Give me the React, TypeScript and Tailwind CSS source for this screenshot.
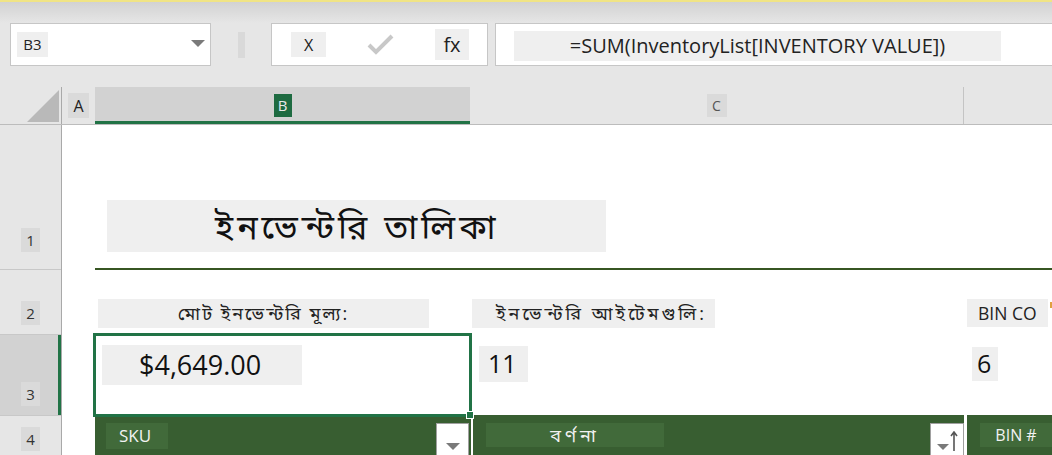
import React from "react";

const latin = "font-['Open_Sans','Noto_Sans','Noto_Sans_Bengali','Lohit_Bengali',sans-serif]";

//          component: small grey label chip used by headers          //
function Chip({ children, className = "" }: { children: React.ReactNode; className?: string }) {
  return <div className={`flex items-center justify-center ${className}`}>{children}</div>;
}

function RowHead({ n, h, pb, active }: { n: string; h: string; pb: string; active?: boolean }) {
  return (
    <div className={`flex ${h} ${active ? "bg-[#d2d2d2]" : ""} border-b border-[#c8c8c8]`}>
      <div className={`flex flex-1 items-end ${pb} pl-[21px]`}>
        <Chip className="h-[24px] w-[19px] bg-[#dadada] text-[15px] text-[#333]">{n}</Chip>
      </div>
      {active && <div className="w-[3px] bg-[#217346]" />}
    </div>
  );
}

export default function App() {
  return (
    <div className={`h-[455px] w-[1052px] overflow-hidden bg-[#e6e6e6] ${latin}`}>
      {/* title strip */}
      <div className="h-[2px] bg-[#f0e485]" />
      <div className="h-[21px] bg-gradient-to-b from-[#d2d2d2] to-[#e6e6e6]" />

      {/* formula bar */}
      <div className="flex h-[43px]">
        <div className="ml-[10px] flex w-[201px] items-center border border-[#c6c6c6] bg-white pl-[6px] pr-[3px]">
          <Chip className="h-[25px] w-[31px] bg-[#efefef] text-[15px] text-[#222]">B3</Chip>
          <div className="flex-1" />
          <svg width="14" height="7" viewBox="0 0 14 7" className="mr-[2px] mb-[2px]">
            <polygon points="0,0 14,0 7,7" fill="#7a7a7a" />
          </svg>
        </div>
        <div className="ml-[27px] mt-[9px] h-[26px] w-[7px] bg-[#d9d9d9]" />
        <div className="ml-[26px] flex w-[217px] items-center border border-[#c6c6c6] bg-white">
          <Chip className="ml-[19px] h-[25px] w-[35px] bg-[#efefef] text-[16px] text-[#222]">X</Chip>
          <svg width="27" height="21" viewBox="0 0 27 21" className="ml-[41px]">
            <polyline points="2,11 9,18 25,2" fill="none" stroke="#c8c8c8" strokeWidth="4" />
          </svg>
          <Chip className="ml-[41px] h-[31px] w-[34px] bg-[#efefef] text-[20px] text-[#222]">fx</Chip>
        </div>
        <div className="ml-[7px] flex flex-1 items-center border-y border-l border-[#c6c6c6] bg-white pl-[18px]">
          <Chip className="mt-[2px] h-[30px] w-[487px] bg-[#efefef] text-[20px] text-[#222]">
            =SUM(InventoryList[INVENTORY VALUE])
          </Chip>
        </div>
      </div>

      <div className="h-[21px]" />

      {/* column headers */}
      <div className="flex h-[38px] border-b border-[#bcbcbc]">
        <div className="flex w-[62px] items-start border-r border-[#a9a9a9] pl-[27px] pt-[3px]">
          <svg width="32" height="32" viewBox="0 0 32 32">
            <polygon points="32,0 32,32 0,32" fill="#b9b9b9" />
          </svg>
        </div>
        <div className="flex w-[33px] items-start pl-[6px] pt-[6px]">
          <Chip className="h-[25px] w-[21px] bg-[#dadada] text-[16px] text-[#222]">A</Chip>
        </div>
        <div className="flex w-[375px] items-start justify-center border-b-[3px] border-[#217346] bg-[#d2d2d2] pt-[7px]">
          <Chip className="h-[23px] w-[18px] bg-[#1e6b41] text-[15px] text-[#e8e8e8]">B</Chip>
        </div>
        <div className="flex w-[494px] items-start justify-center border-r border-[#c4c4c4] pt-[7px]">
          <Chip className="h-[23px] w-[20px] bg-[#dadada] text-[14px] text-[#555]">C</Chip>
        </div>
        <div className="flex-1" />
      </div>

      {/* grid body */}
      <div className="flex h-[330px]">
        <div className="w-[62px] border-r border-[#a9a9a9]">
          <RowHead n="1" h="h-[145px]" pb="pb-[17px]" />
          <RowHead n="2" h="h-[65px]" pb="pb-[9px]" />
          <RowHead n="3" h="h-[81px]" pb="pb-[9px]" active />
          <RowHead n="4" h="h-[40px]" pb="pb-[4px]" />
        </div>

        <div className="flex-1 overflow-hidden bg-white">
          {/* row 1 */}
          <div className="h-[145px] pt-[75px]">
            <div className="ml-[45px] flex h-[52px] w-[499px] items-center bg-[#efefef] pl-[108px] text-[34px] leading-none tracking-[4px] text-[#111]">
              ইনভেন্টরি তালিকা
            </div>
            <div className="ml-[33px] mt-[16px] h-[2px] bg-[#375623]" />
          </div>

          {/* row 2 */}
          <div className="flex h-[65px] items-start pt-[29px] text-[18px] text-[#222]">
            <Chip className="ml-[36px] h-[29px] w-[331px] bg-[#efefef] tracking-[2px]">মোট ইনভেন্টরি মূল্য:</Chip>
            <div className="ml-[43px] flex h-[29px] w-[243px] items-center bg-[#efefef] pl-[24px] tracking-[3px]">
              ইনভেন্টরি আইটেমগুলি:
            </div>
            <div className="ml-[252px] flex h-[28px] w-[81px] items-center bg-[#efefef] pl-[11px] text-[17.5px]">
              BIN CO
            </div>
            <div className="ml-[2px] mt-[3px] h-[6px] w-[2px] bg-[#e0a040]" />
          </div>

          {/* row 3 */}
          <div className="flex h-[80px] items-start">
            <div className="relative z-10 ml-[31px] -mt-[2px] h-[84px] w-[379px] border-[3px] border-[#217346] bg-white pl-[6px] pt-[9px]">
              <div className="flex h-[40px] w-[200px] items-center bg-[#efefef] pl-[37px] text-[27px] text-[#111]">
                $4,649.00
              </div>
              <div className="absolute -bottom-[5px] -right-[5px] h-[8px] w-[8px] border border-white bg-[#217346]" />
            </div>
            <div className="ml-[7px] mt-[11px] flex h-[36px] w-[49px] items-center bg-[#efefef] pl-[9px] text-[25px] text-[#111]">
              11
            </div>
            <div className="ml-[444px] mt-[12px] flex h-[34px] w-[26px] items-center bg-[#efefef] pl-[5px] text-[25px] text-[#111]">
              6
            </div>
          </div>

          {/* row 4: table header */}
          <div className="ml-[33px] flex h-[40px] bg-[#385e31] text-[16px] text-[#f2f2f2]">
            <div className="ml-[11px] mt-[8px] flex h-[26px] w-[62px] items-center bg-[#416a3a] pl-[13px] text-[17px]">
              SKU
            </div>
            <div className="ml-[268px] mt-[8px] flex h-[34px] w-[33px] items-end justify-center border border-[#a0a0a0] bg-white pb-[6px]">
              <svg width="14" height="7" viewBox="0 0 14 7">
                <polygon points="0,0 14,0 7,7" fill="#7a7a7a" />
              </svg>
            </div>
            <div className="ml-[2px] w-[2px] bg-white" />
            <Chip className="ml-[13px] mt-[8px] h-[24px] w-[178px] bg-[#416a3a] text-[18px] tracking-[4px]">বর্ণনা</Chip>
            <div className="ml-[266px] mt-[8px] flex h-[34px] w-[34px] items-end justify-center gap-[1px] border border-[#a0a0a0] bg-white pb-[5px]">
              <svg width="12" height="6" viewBox="0 0 12 6" className="mb-[1px]">
                <polygon points="0,0 12,0 6,6" fill="#7a7a7a" />
              </svg>
              <svg width="8" height="20" viewBox="0 0 8 20">
                <path d="M4 1 L4 20 M1 5 L4 1 L7 5" fill="none" stroke="#555" strokeWidth="1.6" />
              </svg>
            </div>
            <div className="w-[3px] bg-white" />
            <Chip className="ml-[13px] mt-[8px] h-[24px] w-[72px] bg-[#416a3a]">BIN #</Chip>
          </div>
        </div>
      </div>
    </div>
  );
}
